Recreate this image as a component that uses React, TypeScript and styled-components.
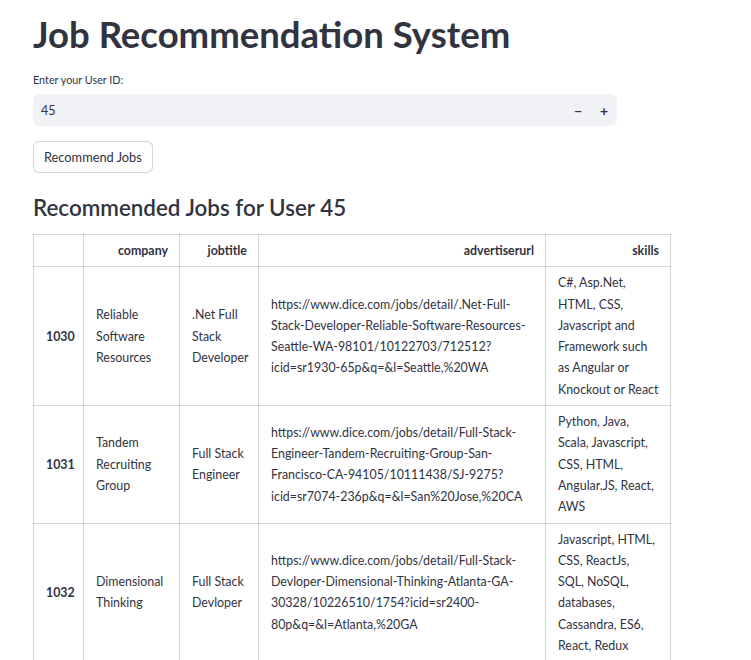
import React from "react";
import styled, { createGlobalStyle } from "styled-components";

const GlobalStyle = createGlobalStyle`
  html, body { margin: 0; padding: 0; background: #ffffff; }
  body {
    font-family: "Lato", "Noto Sans", sans-serif;
    color: rgb(49, 51, 63);
  }
`;

const Page = styled.main`
  padding: 12px 33px 0 33px;
  display: flex;
  flex-direction: column;
  align-items: flex-start;
`;

const Title = styled.h1`
  margin: 0;
  font-size: 36.5px;
  font-weight: 700;
  line-height: 44px;
  color: rgb(49, 51, 63);
`;

const Label = styled.label`
  margin-top: 16px;
  font-size: 10.8px;
  line-height: 16px;
  color: rgb(49, 51, 63);
`;

const NumberField = styled.div`
  margin-top: 6px;
  width: 584px;
  height: 32px;
  background: #f0f2f6;
  border-radius: 6px;
  display: flex;
  align-items: center;
  box-sizing: border-box;
  padding: 0 0 0 8px;
`;

const NumberValue = styled.span`
  flex: 1;
  font-size: 12.5px;
`;

const StepButton = styled.span`
  width: 26px;
  text-align: center;
  font-size: 14px;
  font-weight: 700;
  color: rgb(49, 51, 63);
`;

const Button = styled.button`
  margin-top: 15px;
  height: 32px;
  padding: 0 10px;
  background: #ffffff;
  border: 1px solid rgba(49, 51, 63, 0.2);
  border-radius: 6px;
  font-family: inherit;
  font-size: 12.8px;
  color: rgb(49, 51, 63);
`;

const Subtitle = styled.h3`
  margin: 20px 0 0 0;
  font-size: 22.4px;
  line-height: 30px;
  font-weight: 600;
  color: rgb(49, 51, 63);
`;

const Table = styled.table`
  margin-top: 11px;
  border-collapse: collapse;
  table-layout: fixed;
  width: 638px;
  font-size: 12.4px;
  line-height: 21.3px;
  color: rgb(49, 51, 63);
  border: 1px solid rgba(49, 51, 63, 0.2);
`;

const Th = styled.th`
  text-align: right;
  font-weight: 700;
  padding: 5px 11px 5px 12px;
  border: 1px solid rgba(49, 51, 63, 0.2);
  vertical-align: middle;
`;

const Td = styled.td<{ $index?: boolean }>`
  text-align: ${(p) => (p.$index ? "right" : "left")};
  font-weight: ${(p) => (p.$index ? 700 : 400)};
  padding: ${(p) => (p.$index ? "5px 11px 5px 12px" : "5px 8px 5px 12px")};
  border: 1px solid rgba(49, 51, 63, 0.2);
  vertical-align: middle;
`;

const rows = [
  {
    id: "1030",
    company: "Reliable Software Resources",
    title: ".Net Full Stack Developer",
    url: "https://www.dice.com/jobs/detail/.Net-Full-Stack-Developer-Reliable-Software-Resources-Seattle-WA-98101/10122703/712512?icid=sr1930-65p&q=&l=Seattle,%20WA",
    skills: "C#, Asp.Net, HTML, CSS, Javascript and Framework such as Angular or Knockout or React",
  },
  {
    id: "1031",
    company: "Tandem Recruiting Group",
    title: "Full Stack Engineer",
    url: "https://www.dice.com/jobs/detail/Full-Stack-Engineer-Tandem-Recruiting-Group-San-Francisco-CA-94105/10111438/SJ-9275?icid=sr7074-236p&q=&l=San%20Jose,%20CA",
    skills: "Python, Java, Scala, Javascript, CSS, HTML, Angular.JS, React, AWS",
  },
  {
    id: "1032",
    company: "Dimensional Thinking",
    title: "Full Stack Devloper",
    url: "https://www.dice.com/jobs/detail/Full-Stack-Devloper-Dimensional-Thinking-Atlanta-GA-30328/10226510/1754?icid=sr2400-80p&q=&l=Atlanta,%20GA",
    skills: "Javascript, HTML, CSS, ReactJs, SQL,\u00a0NoSQL, databases, Cassandra, ES6, React, Redux",
  },
];

export default function App() {
  return (
    <>
      <GlobalStyle />
      <Page>
        <Title>Job Recommendation System</Title>
        <Label>Enter your User ID:</Label>
        <NumberField>
          <NumberValue>45</NumberValue>
          <StepButton>−</StepButton>
          <StepButton>+</StepButton>
        </NumberField>
        <Button>Recommend Jobs</Button>
        <Subtitle>Recommended Jobs for User 45</Subtitle>
        <Table>
          <colgroup>
            <col style={{ width: 50 }} />
            <col style={{ width: 96 }} />
            <col style={{ width: 79 }} />
            <col style={{ width: 287 }} />
            <col style={{ width: 125 }} />
          </colgroup>
          <thead>
            <tr>
              <Th></Th>
              <Th>company</Th>
              <Th>jobtitle</Th>
              <Th>advertiserurl</Th>
              <Th>skills</Th>
            </tr>
          </thead>
          <tbody>
            {rows.map((r) => (
              <tr key={r.id}>
                <Td $index>{r.id}</Td>
                <Td>{r.company}</Td>
                <Td>{r.title}</Td>
                <Td>{r.url}</Td>
                <Td>{r.skills}</Td>
              </tr>
            ))}
          </tbody>
        </Table>
      </Page>
    </>
  );
}
